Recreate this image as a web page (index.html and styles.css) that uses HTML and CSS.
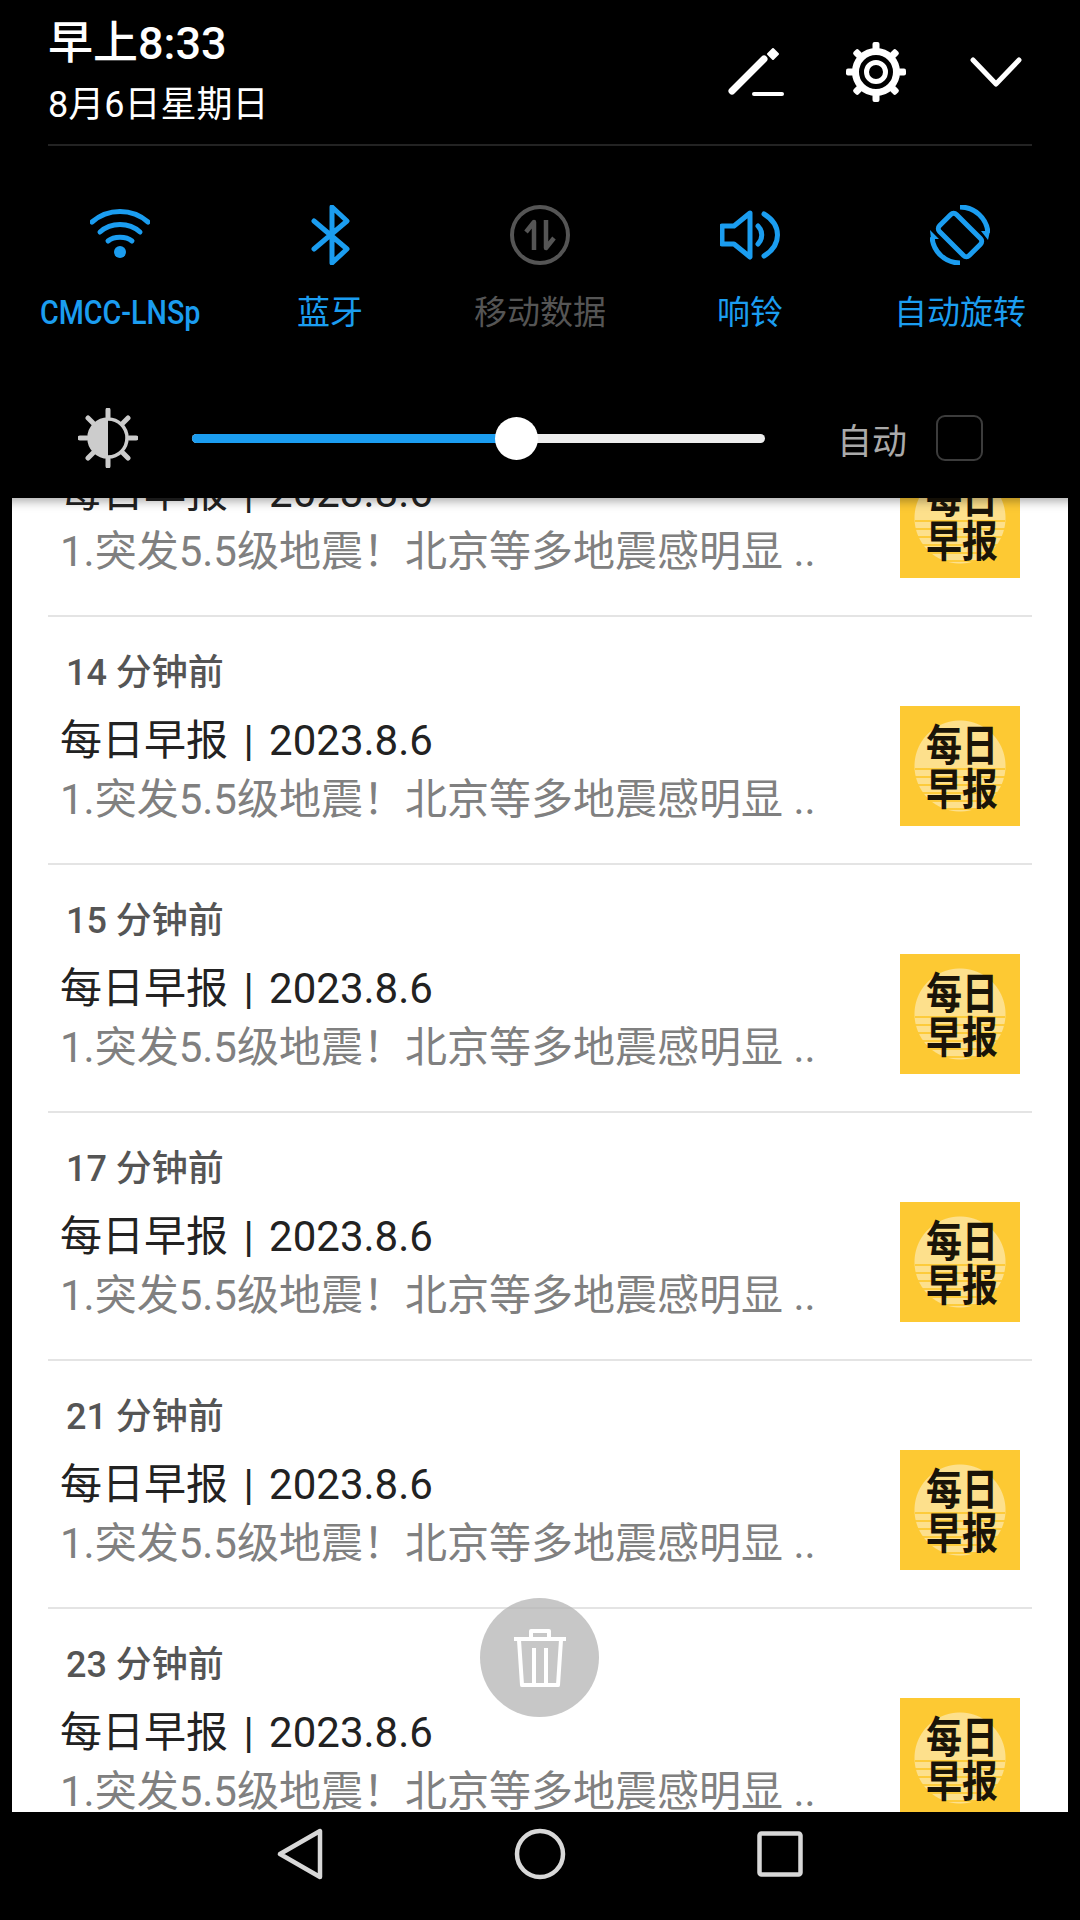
FILE: index.html
```html
<!DOCTYPE html>
<html lang="zh">
<head>
    <meta charset="UTF-8">
    <title>通知栏</title>
    <link rel="stylesheet" href="styles.css">
</head>
<body>
    <div class="shade">
        <div class="top-bar">
            <div class="clock">
                <div class="time">早上8:33</div>
                <div class="date">8月6日星期日</div>
            </div>
            <div class="top-icons">
                <svg class="icon-pen" width="58" height="50" viewBox="0 0 58 50">
                    <path d="M5 44 L37 12" stroke="#fff" stroke-width="7" stroke-linecap="round"/>
                    <path d="M46 2 L51 7 L46 12 L41 7 Z" fill="#fff" stroke="#fff" stroke-width="2" stroke-linejoin="round"/>
                    <path d="M27 47 H55" stroke="#fff" stroke-width="4" stroke-linecap="round"/>
                </svg>
                <svg class="icon-gear" width="60" height="60" viewBox="0 0 60 60">
                    <g fill="#fff">
                        <rect x="26.5" y="0" width="7" height="60" rx="2"/>
                        <rect x="26.5" y="0" width="7" height="60" rx="2" transform="rotate(45 30 30)"/>
                        <rect x="26.5" y="0" width="7" height="60" rx="2" transform="rotate(90 30 30)"/>
                        <rect x="26.5" y="0" width="7" height="60" rx="2" transform="rotate(135 30 30)"/>
                    </g>
                    <circle cx="30" cy="30" r="20.5" fill="#000" stroke="#fff" stroke-width="7"/>
                    <circle cx="30" cy="30" r="9.5" fill="none" stroke="#fff" stroke-width="5"/>
                </svg>
                <svg class="icon-chevron" width="52" height="30" viewBox="0 0 52 30">
                    <path d="M3 3 L26 27 L49 3" fill="none" stroke="#fff" stroke-width="5" stroke-linecap="round" stroke-linejoin="round"/>
                </svg>
            </div>
        </div>

        <div class="tiles">
            <div class="tile">
                <svg width="60" height="60" viewBox="0 0 60 60">
                    <g fill="none" stroke="#1b9df0" stroke-width="5" stroke-linecap="round">
                        <path d="M2 17 C18 3 42 3 58 17"/>
                        <path d="M10 27 C21 17 39 17 50 27"/>
                        <path d="M18 36 C24 31 36 31 42 36"/>
                    </g>
                    <circle cx="30" cy="47" r="6" fill="#1b9df0"/>
                </svg>
                <div class="tile-label"><span class="narrow">CMCC-LNSp</span></div>
            </div>
            <div class="tile">
                <svg width="60" height="60" viewBox="0 0 60 60">
                    <path d="M14 16 L47 44 L32 58 V2 L47 16 L14 44" fill="none" stroke="#1b9df0" stroke-width="5" stroke-linecap="round" stroke-linejoin="round"/>
                </svg>
                <div class="tile-label">蓝牙</div>
            </div>
            <div class="tile off">
                <svg width="60" height="60" viewBox="0 0 60 60">
                    <circle cx="30" cy="30" r="28" fill="none" stroke="#555" stroke-width="4"/>
                    <path d="M24 45 V17 L16 27 M36 15 V43 L44 33" fill="none" stroke="#555" stroke-width="4.5" stroke-linejoin="round"/>
                </svg>
                <div class="tile-label">移动数据</div>
            </div>
            <div class="tile">
                <svg width="60" height="60" viewBox="0 0 60 60">
                    <g fill="none" stroke="#1b9df0" stroke-width="5" stroke-linecap="round" stroke-linejoin="round">
                        <path d="M30 8 L14 21 H2 V39 H14 L30 52 Z"/>
                        <path d="M38 21 C43 26 43 34 38 39"/>
                        <path d="M44 9 C62 20 62 40 44 51"/>
                    </g>
                </svg>
                <div class="tile-label">响铃</div>
            </div>
            <div class="tile">
                <svg width="60" height="60" viewBox="0 0 60 60">
                    <g fill="none" stroke="#1b9df0" stroke-width="5" stroke-linejoin="round">
                        <rect x="18" y="9" width="24" height="42" rx="4" transform="rotate(-45 30 30)"/>
                        <path d="M30 2 A28 28 0 0 1 58 28"/>
                        <path d="M30 58 A28 28 0 0 1 2 32"/>
                    </g>
                    <path d="M51 26 H60 L58 35 Z M0 25 L9 34 H1 Z" fill="#1b9df0"/>
                </svg>
                <div class="tile-label">自动旋转</div>
            </div>
        </div>

        <div class="brightness">
            <svg class="icon-sun" width="60" height="60" viewBox="0 0 60 60">
                <g stroke="#ccc" stroke-width="5" stroke-linecap="round">
                    <path d="M30 2 V9 M30 51 V58 M2 30 H9 M51 30 H58 M10 10 L15 15 M45 45 L50 50 M50 10 L45 15 M15 45 L10 50"/>
                </g>
                <circle cx="30" cy="30" r="19" fill="none" stroke="#ccc" stroke-width="3.5"/>
                <path d="M30 11 A19 19 0 0 0 30 49 Z" fill="#ccc"/>
            </svg>
            <div class="slider">
                <div class="slider-fill"></div>
                <div class="slider-knob"></div>
            </div>
            <div class="auto-label">自动</div>
            <div class="auto-check"></div>
        </div>
    </div>

    <div class="panel">
        <div class="list">
            <div class="row">
                <div class="row-text">
                    <div class="row-time">13 分钟前</div>
                    <div class="row-title">每日早报 | 2023.8.6</div>
                    <div class="row-desc">1.突发5.5级地震！北京等多地震感明显 ..</div>
                </div>
                <div class="thumb"><span>每</span><span>日</span><span>早</span><span>报</span></div>
            </div>
            <div class="row">
                <div class="row-text">
                    <div class="row-time">14 分钟前</div>
                    <div class="row-title">每日早报 | 2023.8.6</div>
                    <div class="row-desc">1.突发5.5级地震！北京等多地震感明显 ..</div>
                </div>
                <div class="thumb"><span>每</span><span>日</span><span>早</span><span>报</span></div>
            </div>
            <div class="row">
                <div class="row-text">
                    <div class="row-time">15 分钟前</div>
                    <div class="row-title">每日早报 | 2023.8.6</div>
                    <div class="row-desc">1.突发5.5级地震！北京等多地震感明显 ..</div>
                </div>
                <div class="thumb"><span>每</span><span>日</span><span>早</span><span>报</span></div>
            </div>
            <div class="row">
                <div class="row-text">
                    <div class="row-time">17 分钟前</div>
                    <div class="row-title">每日早报 | 2023.8.6</div>
                    <div class="row-desc">1.突发5.5级地震！北京等多地震感明显 ..</div>
                </div>
                <div class="thumb"><span>每</span><span>日</span><span>早</span><span>报</span></div>
            </div>
            <div class="row">
                <div class="row-text">
                    <div class="row-time">21 分钟前</div>
                    <div class="row-title">每日早报 | 2023.8.6</div>
                    <div class="row-desc">1.突发5.5级地震！北京等多地震感明显 ..</div>
                </div>
                <div class="thumb"><span>每</span><span>日</span><span>早</span><span>报</span></div>
            </div>
            <div class="row">
                <div class="row-text">
                    <div class="row-time">23 分钟前</div>
                    <div class="row-title">每日早报 | 2023.8.6</div>
                    <div class="row-desc">1.突发5.5级地震！北京等多地震感明显 ..</div>
                </div>
                <div class="thumb"><span>每</span><span>日</span><span>早</span><span>报</span></div>
            </div>
        </div>
        <div class="trash">
            <svg width="54" height="60" viewBox="0 0 54 60">
                <g fill="none" stroke="#fff" stroke-width="4" stroke-linejoin="round">
                    <path d="M18 9 V3 H36 V9"/>
                    <path d="M6 12 L9 57 H45 L48 12"/>
                    <path d="M21 20 V56 M33 20 V56"/>
                </g>
                <path d="M1 9 H53 V13 H1 Z" fill="#fff"/>
            </svg>
        </div>
    </div>

    <div class="nav">
        <div class="nav-btn">
            <svg width="46" height="52" viewBox="0 0 46 52">
                <path d="M43 3 V49 L3 26 Z" fill="none" stroke="#d8d8d8" stroke-width="4.5" stroke-linejoin="round"/>
            </svg>
        </div>
        <div class="nav-btn">
            <svg width="52" height="52" viewBox="0 0 52 52">
                <circle cx="26" cy="26" r="23" fill="none" stroke="#d8d8d8" stroke-width="4.5"/>
            </svg>
        </div>
        <div class="nav-btn">
            <svg width="46" height="46" viewBox="0 0 46 46">
                <rect x="2.5" y="2.5" width="41" height="41" rx="2" fill="none" stroke="#d8d8d8" stroke-width="4.5"/>
            </svg>
        </div>
    </div>
</body>
</html>
```

FILE: styles.css
```css
* {
    box-sizing: border-box;
}

body {
    margin: 0;
    width: 1080px;
    height: 1920px;
    display: flex;
    flex-direction: column;
    overflow: hidden;
    background: #000;
    font-family: Roboto, "Noto Sans CJK SC", sans-serif;
}

svg {
    display: block;
}

/* top shade */
.shade {
    height: 498px;
    background: #000;
    position: relative;
    z-index: 2;
    box-shadow: 0 3px 10px rgba(0,0,0,0.35);
}

.top-bar {
    height: 146px;
    margin: 0 48px;
    padding-top: 17px;
    display: flex;
    justify-content: space-between;
    border-bottom: 2px solid #232323;
}

.time {
    color: #fff;
    font-size: 45px;
    font-weight: 500;
    line-height: 54px;
}

.date {
    color: #fff;
    font-size: 36px;
    line-height: 44px;
    margin-top: 12px;
}

.top-icons {
    display: flex;
    align-items: center;
    height: 60px;
    margin-top: 25px;
    margin-right: 10px;
    gap: 61px;
}

.icon-chevron {
    margin-left: 3px;
}

.tiles {
    display: grid;
    grid-template-columns: repeat(5, 210px);
    padding: 59px 15px 0;
}

.tile {
    display: flex;
    flex-direction: column;
    align-items: center;
}

.tile-label {
    margin-top: 26px;
    color: #1b9df0;
    font-size: 33px;
    line-height: 44px;
    white-space: nowrap;
}

.tile.off .tile-label {
    color: #555;
}

.narrow {
    display: inline-block;
    font-weight: 500;
    transform: scaleX(0.87);
}

.brightness {
    display: flex;
    align-items: center;
    margin-top: 73px;
    padding-left: 78px;
}

.slider {
    width: 573px;
    height: 9px;
    margin-left: 54px;
    border-radius: 5px;
    background: #eee;
    position: relative;
}

.slider-fill {
    width: 324px;
    height: 9px;
    border-radius: 5px 0 0 5px;
    background: #1b9df0;
}

.slider-knob {
    position: absolute;
    left: 303px;
    top: -17px;
    width: 43px;
    height: 43px;
    border-radius: 50%;
    background: #fff;
}

.auto-label {
    margin-left: 72px;
    color: #aaa;
    font-size: 35px;
}

.auto-check {
    width: 47px;
    height: 46px;
    margin-left: 29px;
    border: 2px solid #3c3c3c;
    border-radius: 9px;
}

/* notification list */
.panel {
    flex: 1;
    margin: 0 12px;
    background: #fff;
    overflow: hidden;
    position: relative;
}

.list {
    margin-top: -129px;
    padding: 0 36px;
}

.row {
    height: 248px;
    padding: 34px 12px 0;
    display: flex;
    justify-content: space-between;
    border-bottom: 2px solid #e4e4e4;
}

.row-time {
    margin-left: 6px;
    color: #555;
    font-size: 36px;
    font-weight: 500;
    line-height: 44px;
}

.row-title {
    margin-top: 17px;
    color: #222;
    font-size: 42px;
    line-height: 58px;
    word-spacing: 5px;
    white-space: nowrap;
}

.row-desc {
    margin-top: 1px;
    color: #808080;
    font-size: 42px;
    line-height: 58px;
    white-space: nowrap;
}

.thumb {
    width: 120px;
    height: 120px;
    margin-top: 55px;
    padding: 19px 22px 0 26px;
    display: grid;
    grid-template-columns: 36px 36px;
    grid-template-rows: 44px 44px;
    background-color: #fdc933;
    background-image:
        repeating-linear-gradient(180deg, rgba(253,201,51,0.9) 0 2px, transparent 2px 8px),
        radial-gradient(circle at 50% 50%, #fde08c 45px, transparent 46px);
    background-size: 90px 42px, 100% 100%;
    background-position: 15px 62px, 0 0;
    background-repeat: no-repeat;
    color: #1a1408;
    font-size: 36px;
    font-weight: 700;
    line-height: 36px;
    text-align: center;
}

.thumb span {
    display: block;
    height: 36px;
    margin: 4px 0;
    transform: scaleY(1.2);
}

.trash {
    position: absolute;
    left: 468px;
    top: 1100px;
    width: 119px;
    height: 119px;
    border-radius: 50%;
    background: rgba(180,180,180,0.75);
    display: flex;
    align-items: center;
    justify-content: center;
}

/* navigation bar */
.nav {
    height: 108px;
    padding-bottom: 24px;
    display: flex;
    justify-content: center;
    align-items: center;
    background: #000;
    position: relative;
    z-index: 2;
}

.nav-btn {
    width: 240px;
    display: flex;
    justify-content: center;
}
```
